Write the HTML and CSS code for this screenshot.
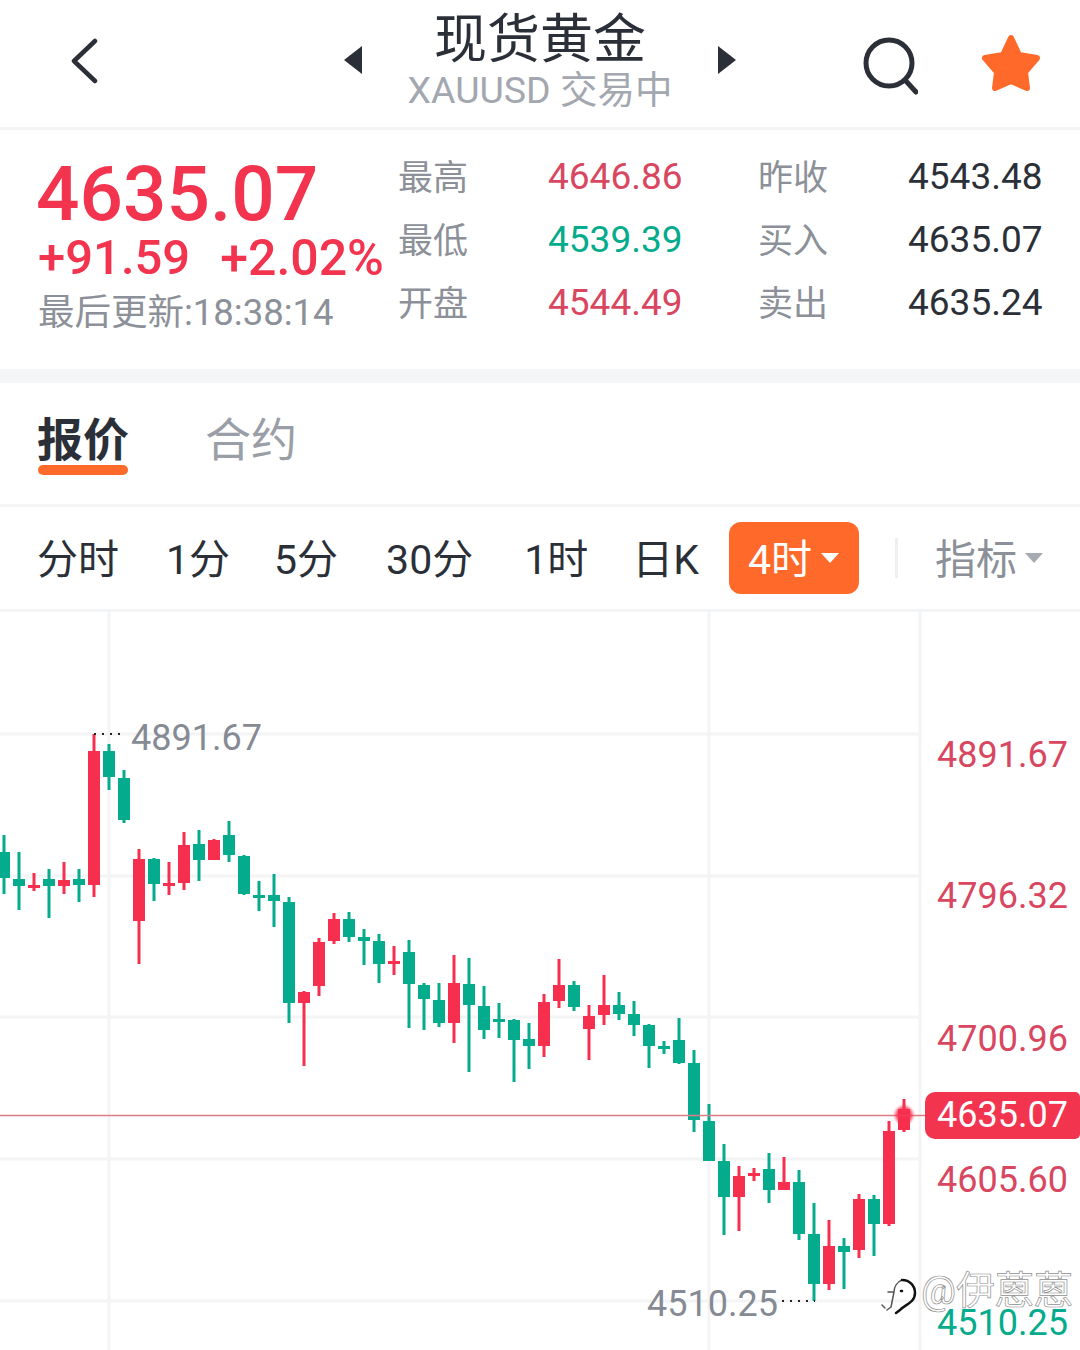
FILE: index.html
```html
<!DOCTYPE html>
<html lang="zh-CN">

<head>
  <meta charset="UTF-8">
  <meta name="viewport" content="width=device-width, initial-scale=1.0">
  <title>现货黄金 XAUUSD</title>
  <link rel="stylesheet" href="styles.css">
</head>

<body>
  <div class="page">
    <header class="topbar">
      <div class="topbar-left">
        <svg class="icon-back" width="28" height="46" viewBox="0 0 28 46">
          <path d="M25 3L4 23l21 20" />
        </svg>
      </div>
      <div class="topbar-center">
        <span class="arrow arrow-left"></span>
        <div class="title-block">
          <div class="title">现货黄金</div>
          <div class="subtitle">XAUUSD 交易中</div>
        </div>
        <span class="arrow arrow-right"></span>
      </div>
      <div class="topbar-right">
        <svg class="icon-search" width="56" height="60" viewBox="0 0 56 60">
          <circle cx="27" cy="27" r="23" />
          <path d="M43 44l11 12" />
        </svg>
        <svg class="icon-star" width="60" height="58" viewBox="0 0 60 58">
          <path d="M30 4l8 17 18 3-12 14 2 16-16-7-16 7 2-16L4 24l18-3z" />
        </svg>
      </div>
    </header>

    <section class="quote">
      <div class="quote-main">
        <div class="last-price">4635.07</div>
        <div class="change"><span>+91.59</span><span>+2.02%</span></div>
        <div class="updated">最后更新:18:38:14</div>
      </div>
      <div class="quote-stats">
        <span class="stat-label">最高</span><span class="stat-value up">4646.86</span>
        <span class="stat-label">昨收</span><span class="stat-value">4543.48</span>
        <span class="stat-label">最低</span><span class="stat-value down">4539.39</span>
        <span class="stat-label">买入</span><span class="stat-value">4635.07</span>
        <span class="stat-label">开盘</span><span class="stat-value up">4544.49</span>
        <span class="stat-label">卖出</span><span class="stat-value">4635.24</span>
      </div>
    </section>

    <nav class="tabs">
      <div class="tab active">报价</div>
      <div class="tab">合约</div>
    </nav>

    <div class="periods">
      <span class="period p-first">分时</span>
      <span class="period p-1m">1分</span>
      <span class="period p-5m">5分</span>
      <span class="period p-30m">30分</span>
      <span class="period p-1h">1时</span>
      <span class="period p-day">日K</span>
      <span class="period-active"><b>4时</b><i class="caret caret-white"></i></span>
      <span class="period-sep"></span>
      <span class="period-index"><b>指标</b><i class="caret caret-gray"></i></span>
    </div>

    <div class="chart">
      <svg id="kline" width="1080" height="739" viewBox="0 611 1080 739">
        <g class="grid">
          <path d="M0 733H920M0 875H920M0 1016H920M0 1158H920M0 1300H920" />
          <path d="M109 611V1350M709 611V1350M920 611V1350" />
        </g>
        <g id="candles"></g>
        <path class="last-line" d="M0 1114.5H925" />
        <circle class="last-dot" cx="904" cy="1114" r="9" />
        <path class="dots" d="M94 733H126M782 1300H815" />
        <text class="mark" x="131" y="749">4891.67</text>
        <text class="mark" x="647" y="1315">4510.25</text>
        <text class="axis up" x="937" y="766">4891.67</text>
        <text class="axis up" x="937" y="907">4796.32</text>
        <text class="axis up" x="937" y="1050">4700.96</text>
        <text class="axis up" x="937" y="1191">4605.60</text>
        <text class="axis down" x="937" y="1334">4510.25</text>
      </svg>
      <div class="last-tag">4635.07</div>
      <div class="watermark">
        <svg width="38" height="38" viewBox="0 0 38 38">
          <path class="wm-soft" d="M22 2c-5 2-8 7-8 12l-3 15-4 3M8 14h6M2 27l3 3" />
          <path class="wm-bold" d="M22 2c8 0 13 6 13 13 0 10-11 12-15 17l-4 3" />
          <path class="wm-bold" d="M21 13h1" />
        </svg>
        <span>@伊蒽蒽</span>
      </div>
    </div>
  </div>

  <script src="chart.js"></script>
</body>

</html>
```

FILE: styles.css
```css
:root {
  --orange: #ff6a2b;
  --red: #f2344f;
  --red-soft: #d8475f;
  --green: #04ab8c;
  --dark: #2b3038;
  --gray: #a3a7af;
  --line: #f3f4f6;
}

* {
  box-sizing: border-box;
  margin: 0;
  padding: 0;
}

body {
  background-color: #fff;
  color: var(--dark);
  font-family: Roboto, 'Noto Sans CJK SC', sans-serif;
}

.page {
  width: 1080px;
  height: 1350px;
  overflow: hidden;
}

/* top bar */
.topbar {
  height: 130px;
  display: grid;
  grid-template-columns: 1fr 392px 1fr;
  border-bottom: 3px solid var(--line);
}

.topbar-left {
  padding: 38px 0 0 70px;
}

.icon-back path {
  fill: none;
  stroke: var(--dark);
  stroke-width: 4.5;
  stroke-linecap: round;
  stroke-linejoin: round;
}

.topbar-center {
  display: flex;
  justify-content: space-between;
  align-items: flex-start;
}

.arrow {
  width: 0;
  height: 0;
  margin-top: 46px;
  border-top: 14px solid transparent;
  border-bottom: 14px solid transparent;
}

.arrow-left {
  border-right: 18px solid var(--dark);
}

.arrow-right {
  border-left: 18px solid var(--dark);
}

.title-block {
  padding-top: 2px;
  text-align: center;
}

.title {
  font-size: 53px;
  line-height: 76px;
  color: var(--dark);
}

.subtitle {
  font-size: 37.5px;
  line-height: 42px;
  margin-top: -9px;
  color: var(--gray);
  white-space: nowrap;
}

.topbar-right {
  display: flex;
  justify-content: flex-end;
  align-items: flex-start;
  gap: 62px;
  padding: 34px 39px 0 0;
}

.icon-search {
  margin-top: 2px;
  margin-right: 1px;
}

.icon-search circle,
.icon-search path {
  fill: none;
  stroke: var(--dark);
  stroke-width: 5;
  stroke-linecap: round;
}

.icon-star path {
  fill: var(--orange);
  stroke: var(--orange);
  stroke-width: 6;
  stroke-linejoin: round;
}

/* quote */
.quote {
  height: 253px;
  display: flex;
  border-bottom: 14px solid #f4f5f7;
}

.quote-main {
  width: 398px;
  padding: 26px 0 0 36px;
}

.last-price {
  font-size: 76.5px;
  line-height: 76px;
  font-weight: 500;
  color: var(--red);
}

.change {
  display: flex;
  gap: 30px;
  padding-left: 2px;
  font-size: 49px;
  font-weight: 500;
  line-height: 52px;
  color: var(--red);
}

.change span:last-child {
  font-size: 50px;
}

.updated {
  margin-top: 7px;
  padding-left: 2px;
  font-size: 36.5px;
  line-height: 44px;
  color: #8c9098;
  white-space: nowrap;
}

.quote-stats {
  display: grid;
  grid-template-columns: 150px 210px 150px auto;
  grid-auto-rows: 63px;
  align-items: center;
  padding-top: 15px;
  height: 204px;
}

.stat-label {
  margin-top: -4px;
  font-size: 35px;
  color: #8c9098;
}

.stat-value {
  font-size: 37px;
  color: var(--dark);
}

.stat-value.up {
  color: var(--red-soft);
}

.stat-value.down {
  color: var(--green);
}

/* tabs */
.tabs {
  height: 124px;
  display: flex;
  gap: 76px;
  padding: 25px 0 0 37px;
  border-bottom: 3px solid var(--line);
}

.tab {
  position: relative;
  font-size: 46px;
  line-height: 64px;
  color: #9a9ea6;
}

.tab.active {
  font-weight: 700;
  color: var(--dark);
}

.tab.active::after {
  content: '';
  position: absolute;
  left: 1px;
  right: 1px;
  top: 57px;
  height: 10px;
  background-color: var(--orange);
  border-radius: 5px;
}

/* period row */
.periods {
  height: 105px;
  display: flex;
  align-items: center;
  padding-left: 37px;
  font-size: 41px;
  border-bottom: 3px solid var(--line);
  white-space: nowrap;
}

.period,
.periods b {
  margin-top: -4px;
  font-weight: 400;
}

.p-1m { margin-left: 47px; }
.p-5m { margin-left: 44px; }
.p-30m { margin-left: 48px; }
.p-1h { margin-left: 51px; }
.p-day { margin-left: 44px; }

.period-active {
  display: flex;
  align-items: center;
  width: 130px;
  height: 72px;
  margin-left: 30px;
  padding-left: 19px;
  background-color: var(--orange);
  border-radius: 12px;
  color: #fff;
}

.caret {
  width: 0;
  height: 0;
  margin-left: 9px;
  border-left: 9px solid transparent;
  border-right: 9px solid transparent;
}

.caret-white {
  border-top: 10px solid #fff;
}

.caret-gray {
  margin-left: 8px;
  border-top: 10px solid #a6aab2;
}

.period-sep {
  width: 3px;
  height: 40px;
  margin-left: 36px;
  background-color: #eeeff1;
}

.period-index {
  display: flex;
  align-items: center;
  margin-left: 37px;
  color: #8c9098;
}

/* chart */
.chart {
  position: relative;
  height: 739px;
}

#kline {
  display: block;
}

.grid path {
  fill: none;
  stroke: var(--line);
  stroke-width: 3;
}

.candle-up {
  fill: #f72f4f;
  stroke: #f72f4f;
}

.candle-down {
  fill: var(--green);
  stroke: var(--green);
}

.wick {
  stroke-width: 3;
}

.body {
  stroke: none;
}

.last-line {
  stroke: #dd7c86;
  stroke-width: 1.5;
}

.last-dot {
  fill: #f72f4f;
  opacity: 0.85;
  filter: blur(1.5px);
}

.dots {
  fill: none;
  stroke: #222;
  stroke-width: 2;
  stroke-dasharray: 2 6;
}

.mark,
.axis {
  font-size: 36px;
}

.mark {
  fill: #858a94;
}

.axis.up {
  fill: var(--red-soft);
}

.axis.down {
  fill: var(--green);
}

.last-tag {
  position: absolute;
  left: 925px;
  top: 480px;
  width: 155px;
  height: 47px;
  padding-left: 12px;
  background-color: var(--red);
  border-radius: 10px 5px 5px 10px;
  color: #fff;
  font-size: 36px;
  line-height: 47px;
}

.watermark {
  position: absolute;
  left: 880px;
  top: 657px;
  display: flex;
  align-items: flex-start;
  gap: 3px;
  color: #fff;
  font-size: 39px;
  line-height: 44px;
  -webkit-text-stroke: 0.7px #8f8f8f;
  white-space: nowrap;
}

.watermark svg {
  margin-top: 9px;
}

.wm-soft,
.wm-bold {
  fill: none;
  stroke-linecap: round;
  stroke-linejoin: round;
}

.wm-soft {
  stroke: #555;
  stroke-width: 1.5;
}

.wm-bold {
  stroke: #111;
  stroke-width: 2.5;
}
```

FILE: chart.js
```js
// 每根K线: [最高, 实体上沿, 实体下沿, 最低, 方向] 1=涨 0=跌
const candles = [
  [834, 851, 877, 893, 0], [851, 878, 885, 909, 0], [872, 884, 887, 890, 1], [868, 878, 885, 917, 0],
  [861, 879, 885, 893, 1], [868, 878, 884, 901, 0], [733, 750, 884, 896, 1], [743, 750, 776, 789, 0],
  [769, 777, 819, 822, 0], [848, 858, 920, 963, 1], [857, 858, 883, 900, 0], [861, 882, 885, 894, 1],
  [831, 844, 882, 889, 1], [829, 843, 859, 880, 0], [838, 839, 859, 859, 1], [820, 834, 854, 861, 0],
  [854, 855, 893, 894, 0], [880, 894, 897, 910, 0], [873, 894, 900, 926, 0], [896, 901, 1002, 1022, 0],
  [990, 991, 1002, 1065, 1], [937, 941, 985, 995, 1], [912, 918, 940, 943, 1], [911, 918, 936, 941, 0],
  [928, 936, 940, 964, 0], [933, 940, 963, 982, 0], [945, 960, 963, 974, 1], [939, 951, 983, 1027, 0],
  [982, 984, 998, 1029, 0], [982, 999, 1022, 1026, 0], [954, 982, 1022, 1042, 1], [957, 983, 1004, 1071, 0],
  [985, 1005, 1029, 1038, 0], [1002, 1018, 1020, 1037, 0], [1018, 1019, 1039, 1081, 0], [1022, 1038, 1045, 1068, 0],
  [993, 1001, 1045, 1056, 1], [958, 984, 1000, 1007, 1], [980, 984, 1006, 1010, 0], [1004, 1015, 1028, 1059, 1],
  [974, 1004, 1014, 1024, 1], [991, 1004, 1013, 1019, 0], [1000, 1013, 1024, 1035, 0], [1023, 1024, 1045, 1067, 0],
  [1040, 1045, 1048, 1053, 0], [1017, 1039, 1062, 1063, 0], [1049, 1062, 1119, 1131, 0], [1103, 1120, 1160, 1160, 0],
  [1143, 1160, 1196, 1234, 0], [1165, 1175, 1196, 1230, 1], [1167, 1172, 1175, 1180, 1], [1152, 1168, 1189, 1202, 0],
  [1156, 1181, 1189, 1189, 1], [1169, 1181, 1233, 1239, 0], [1202, 1233, 1283, 1300, 0], [1219, 1245, 1283, 1289, 1],
  [1237, 1245, 1251, 1288, 0], [1193, 1198, 1249, 1257, 1], [1194, 1198, 1223, 1255, 0], [1120, 1130, 1223, 1225, 1],
  [1098, 1108, 1129, 1131, 1]
];

const group = document.getElementById('candles');
const SVG_NS = 'http://www.w3.org/2000/svg';

candles.forEach((c, i) => {
  const x = 4 + i * 15;
  const g = document.createElementNS(SVG_NS, 'g');
  g.setAttribute('class', c[4] ? 'candle-up' : 'candle-down');

  const wick = document.createElementNS(SVG_NS, 'line');
  wick.setAttribute('class', 'wick');
  wick.setAttribute('x1', x);
  wick.setAttribute('x2', x);
  wick.setAttribute('y1', c[0]);
  wick.setAttribute('y2', c[3]);

  const body = document.createElementNS(SVG_NS, 'rect');
  body.setAttribute('class', 'body');
  body.setAttribute('x', x - 6);
  body.setAttribute('y', c[1]);
  body.setAttribute('width', 12);
  body.setAttribute('height', Math.max(c[2] - c[1], 3));

  g.appendChild(wick);
  g.appendChild(body);
  group.appendChild(g);
});
```
